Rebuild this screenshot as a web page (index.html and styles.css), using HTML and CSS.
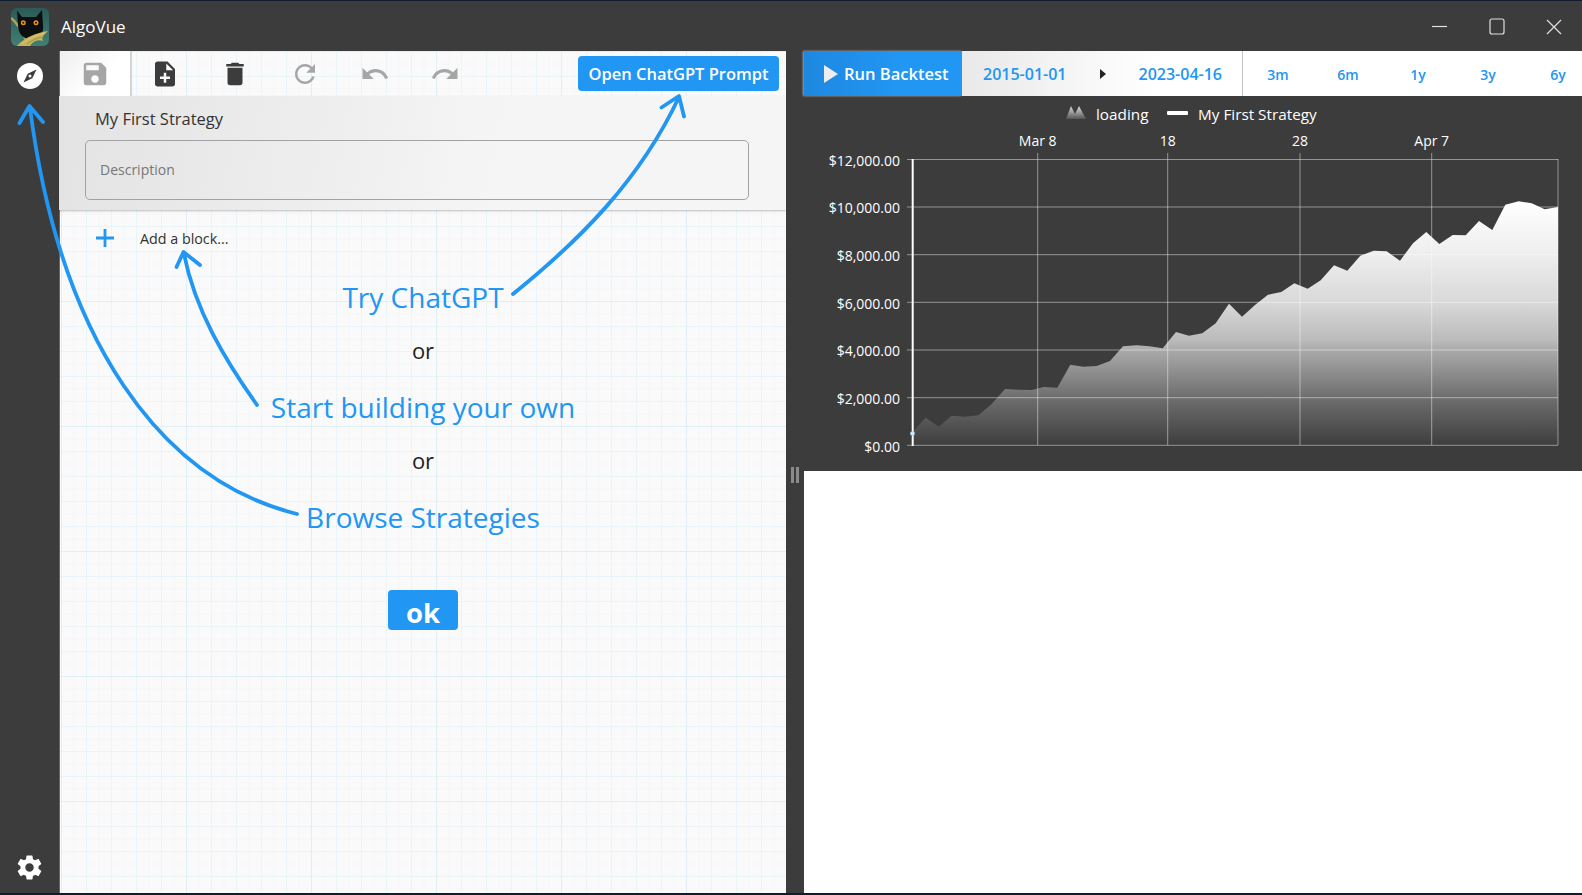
FILE: index.html
```html
<!DOCTYPE html>
<html lang="en">
<head>
    <meta charset="UTF-8"/>
    <title>AlgoVue</title>
    <link rel="stylesheet" href="styles.css">
</head>
<body>
    <div class="app">
        <div class="titlebar">
            <svg class="logo" viewBox="0 0 38 38">
                <defs>
                    <linearGradient id="logoBg" x1="0" y1="0" x2="0" y2="1">
                        <stop offset="0" stop-color="#2b5a58"/>
                        <stop offset="1" stop-color="#3f8074"/>
                    </linearGradient>
                    <clipPath id="logoClip"><rect width="38" height="38" rx="6"/></clipPath>
                </defs>
                <g clip-path="url(#logoClip)">
                    <rect width="38" height="38" fill="url(#logoBg)"/>
                    <path d="M0 10C7 15 11 24 15 32" stroke="#a9a45f" stroke-width="2.500" fill="none"/>
                    <path d="M6 2.500L11 9L25 9L31 2L32 17C33 24 30 30 19 31C11 31 7 24 7 17Z" fill="#0c0e10"/>
                    <path d="M6 38C14 29 25 25 37 23C33 27 30 29 32 33C27 31 22 33 19 38Z" fill="#c9b25c"/>
                    <path d="M11 36C18 30 26 27 34 25" stroke="#e2cf7e" stroke-width=".8" fill="none"/>
                    <path d="M16 36C21 32 26 30 31 29" stroke="#8f8a45" stroke-width=".8" fill="none"/>
                    <circle cx="12.300" cy="14.700" r="2.500" fill="#e8921c"/>
                    <circle cx="25" cy="14.700" r="2.500" fill="#e8921c"/>
                    <circle cx="12.300" cy="14.700" r="1" fill="#221100"/>
                    <circle cx="25" cy="14.700" r="1" fill="#221100"/>
                </g>
            </svg>
            <span class="app-name">AlgoVue</span>
            <div class="win-controls">
                <svg viewBox="0 0 50 50"><path d="M18 25.500H33" stroke="#e0e0e0" stroke-width="1.200"/></svg>
                <svg viewBox="0 0 50 50"><rect x="18" y="18" width="14" height="15" rx="2" fill="none" stroke="#e0e0e0" stroke-width="1.200"/></svg>
                <svg viewBox="0 0 50 50"><path d="M18 19L32 33M32 19L18 33" stroke="#e0e0e0" stroke-width="1.200"/></svg>
            </div>
        </div>

        <div class="main">
            <div class="sidebar">
                <svg class="side-icon" viewBox="0 0 26 26">
                    <circle cx="13" cy="13" r="13" fill="#fff"/>
                    <path d="M19.500 6.500L15.300 15.300L6.500 19.500L10.700 10.700Z" fill="#3c3c3c"/>
                    <circle cx="13" cy="13" r="1.500" fill="#fff"/>
                </svg>
                <svg class="side-gear" viewBox="0 0 24 24">
                    <path fill="#fff" d="M19.430 12.980c.04-.32.07-.64.07-.98s-.03-.66-.07-.98l2.110-1.650c.19-.15.24-.42.12-.64l-2-3.460c-.12-.22-.39-.3-.61-.22l-2.490 1c-.52-.4-1.080-.73-1.690-.98l-.38-2.650C14.460 2.180 14.250 2 14 2h-4c-.25 0-.46.18-.49.42l-.38 2.650c-.61.25-1.170.59-1.690.98l-2.490-1c-.23-.09-.49 0-.61.22l-2 3.460c-.13.22-.07.49.12.64l2.110 1.650c-.04.32-.07.65-.07.98s.03.66.07.98l-2.110 1.650c-.19.15-.24.42-.12.64l2 3.460c.12.22.39.3.61.22l2.490-1c.52.4 1.080.73 1.690.98l.38 2.650c.03.24.24.42.49.42h4c.25 0 .46-.18.49-.42l.38-2.650c.61-.25 1.170-.59 1.690-.98l2.490 1c.23.09.49 0 .61-.22l2-3.460c.12-.22.07-.49-.12-.64l-2.110-1.650zM12 15.500c-1.930 0-3.500-1.570-3.500-3.500s1.570-3.500 3.500-3.500 3.500 1.570 3.500 3.500-1.570 3.500-3.500 3.500z"/>
                </svg>
            </div>

            <div class="editor">
                <div class="toolbar">
                    <div class="tool active">
                        <svg viewBox="0 0 24 24" class="muted"><path d="M17 3H5c-1.110 0-2 .9-2 2v14c0 1.100.89 2 2 2h14c1.100 0 2-.9 2-2V7l-4-4zm-5 16c-1.660 0-3-1.340-3-3s1.340-3 3-3 3 1.340 3 3-1.340 3-3 3zm3-10H5V5h10v4z"/></svg>
                    </div>
                    <div class="tool">
                        <svg viewBox="0 0 24 24"><path d="M14 2H6c-1.100 0-1.990.9-1.990 2L4 20c0 1.100.89 2 1.990 2H18c1.100 0 2-.9 2-2V8l-6-6zm2 14h-3v3h-2v-3H8v-2h3v-3h2v3h3v2zm-3-7V3.500L18.500 9H13z"/></svg>
                    </div>
                    <div class="tool">
                        <svg viewBox="0 0 24 24"><path d="M6 19c0 1.100.9 2 2 2h8c1.100 0 2-.9 2-2V7H6v12zM19 4h-3.500l-1-1h-5l-1 1H5v2h14V4z"/></svg>
                    </div>
                    <div class="tool">
                        <svg viewBox="0 0 24 24" class="muted"><path d="M17.650 6.350C16.200 4.900 14.210 4 12 4c-4.420 0-7.990 3.580-7.990 8s3.570 8 7.990 8c3.730 0 6.840-2.550 7.730-6h-2.080c-.82 2.330-3.040 4-5.650 4-3.310 0-6-2.690-6-6s2.690-6 6-6c1.660 0 3.140.69 4.220 1.780L13 11h7V4l-2.350 2.350z"/></svg>
                    </div>
                    <div class="tool">
                        <svg viewBox="0 0 24 24" class="muted"><path d="M12.500 8c-2.650 0-5.050.99-6.900 2.600L2 7v9h9l-3.620-3.620c1.390-1.160 3.160-1.880 5.120-1.880 3.540 0 6.550 2.310 7.600 5.500l2.370-.78C21.080 11.030 17.150 8 12.500 8z"/></svg>
                    </div>
                    <div class="tool">
                        <svg viewBox="0 0 24 24" class="muted"><path d="M18.400 10.600C16.550 8.990 14.150 8 11.500 8c-4.650 0-8.580 3.030-9.960 7.220L3.900 16c1.050-3.190 4.050-5.500 7.600-5.500 1.950 0 3.730.72 5.120 1.880L13 16h9V7l-3.600 3.600z"/></svg>
                    </div>
                    <button class="prompt-btn">Open ChatGPT Prompt</button>
                </div>

                <div class="strategy-card">
                    <div class="strategy-name">My First Strategy</div>
                    <div class="description">Description</div>
                </div>

                <div class="add-block">
                    <svg viewBox="0 0 18 18"><path d="M9 0V18M0 9H18" stroke="#2196f3" stroke-width="2.800"/></svg>
                    <span>Add a block...</span>
                </div>

                <div class="welcome">
                    <p class="hint">Try ChatGPT</p>
                    <p class="or">or</p>
                    <p class="hint">Start building your own</p>
                    <p class="or">or</p>
                    <p class="hint">Browse Strategies</p>
                    <button class="ok-btn">ok</button>
                </div>
            </div>

            <div class="gutter"><span class="handle"></span></div>

            <div class="results">
                <div class="run-bar">
                    <div class="run-btn">
                        <svg viewBox="0 0 14 18"><path d="M0 0L14 9L0 18Z" fill="#eee"/></svg>
                        Run Backtest
                    </div>
                    <div class="dates">
                        <span>2015-01-01</span>
                        <svg viewBox="0 0 6 10"><path d="M0 0L6 5L0 10Z" fill="#222"/></svg>
                        <span>2023-04-16</span>
                    </div>
                    <div class="periods">
                        <span>3m</span>
                        <span>6m</span>
                        <span>1y</span>
                        <span>3y</span>
                        <span>6y</span>
                    </div>
                </div>

                <div class="chart">
                    <svg viewBox="0 0 778 375">
                        <defs>
                            <linearGradient id="areaFill" gradientUnits="userSpaceOnUse" x1="0" y1="105" x2="0" y2="349">
                                <stop offset="0" stop-color="#fff"/>
                                <stop offset=".22" stop-color="#eee"/>
                                <stop offset=".42" stop-color="#d8d8d8"/>
                                <stop offset=".57" stop-color="#bbb"/>
                                <stop offset=".61" stop-color="#aaa"/>
                                <stop offset=".80" stop-color="#707070"/>
                                <stop offset="1" stop-color="#3e3e3e"/>
                            </linearGradient>
                            <linearGradient id="legendFill" x1="0" y1="0" x2="0" y2="1">
                                <stop offset="0" stop-color="#ddd"/>
                                <stop offset="1" stop-color="#555"/>
                            </linearGradient>
                        </defs>

                        <!-- legend -->
                        <path d="M262 23L267 10L271 18L275 10L282 23Z" fill="url(#legendFill)"/>
                        <text x="292" y="24" class="legend">loading</text>
                        <rect x="363" y="15" width="21" height="4" rx="1" fill="#fff"/>
                        <text x="394" y="24" class="legend">My First Strategy</text>

                        <!-- area -->
                        <path fill="url(#areaFill)" d="M108.700 349.300L108.700 335.700L121.700 321.700L134.700 330.700L147.700 319.700L161 320.700L174.300 319.300L187.700 308L201 293L214.300 293.700L227.700 294L240 291L253.300 291.700L266.300 268.700L279.300 270.700L292.700 270L306 265L319 250.300L332.700 249.300L345.300 250.300L358.700 252.300L372 236L385 239.700L398.300 237.300L411.700 227.300L425 207.700L438 220.700L451 209L464 198.700L477.300 196L490.300 187.300L503.700 192.700L516.700 184.300L530 169.300L543.300 174.700L556.300 159.700L569.700 154.700L582.700 155.300L596 164.700L609 147.300L622.300 136L635.300 148L648.700 139L661.700 139.300L675 125L688.300 134L701.300 108.700L714.700 105.300L727.700 107.300L740.700 113.300L754 111L754 349.300Z"/>

                        <!-- grid -->
                        <path class="grid" d="M103 63.500H754M103 111H754M103 158.700H754M103 206.300H754M103 254H754M103 301.700H754M103 349.300H754"/>
                        <path class="grid" d="M233.700 57V349M363.700 57V349M496 57V349M627.700 57V349M754 63V349"/>
                        <path d="M108.700 63V350" stroke="#fff" stroke-width="2"/>
                        <rect x="106.500" y="336" width="4" height="3" fill="#eef4fa" stroke="#7fa8d0" stroke-width=".6"/>

                        <!-- axis labels -->
                        <text x="96" y="70" class="y-label">$12,000.00</text>
                        <text x="96" y="117" class="y-label">$10,000.00</text>
                        <text x="96" y="165" class="y-label">$8,000.00</text>
                        <text x="96" y="213" class="y-label">$6,000.00</text>
                        <text x="96" y="260" class="y-label">$4,000.00</text>
                        <text x="96" y="308" class="y-label">$2,000.00</text>
                        <text x="96" y="356" class="y-label">$0.00</text>
                        <text x="233.700" y="50" class="x-label">Mar 8</text>
                        <text x="363.700" y="50" class="x-label">18</text>
                        <text x="496" y="50" class="x-label">28</text>
                        <text x="627.700" y="50" class="x-label">Apr 7</text>
                    </svg>
                </div>
                <div class="results-body"></div>
            </div>
        </div>

        <!-- tutorial arrows, drawn over everything -->
        <svg class="arrows" viewBox="0 0 1582 895">
            <path d="M297 514C160 480 60 340 30 108M19.500 123L29.500 106L43 122"/>
            <path d="M257 405C225 360 195 310 184 254M176.500 267L183.500 252L200 265"/>
            <path d="M513 294C580 240 640 180 679 97M661.500 107.500L679 96L684 116.500"/>
        </svg>
    </div>
</body>
</html>
```

FILE: styles.css
```css
* {
    box-sizing: border-box;
}
body {
    margin: 0;
    background: #0f1c2e;
    font-family: "Open Sans", "Noto Sans", sans-serif;
    color: #222;
}
p {
    margin: 0;
}
.app {
    position: relative;
    width: 1582px;
    height: 895px;
    padding: 1px 0 2px 0;
    display: flex;
    flex-direction: column;
    overflow: hidden;
}

/* title bar */
.titlebar {
    height: 50px;
    flex: none;
    display: flex;
    align-items: center;
    background: #3c3c3c;
    color: #fff;
    padding-left: 11px;
}
.logo {
    width: 38px;
    height: 38px;
    margin-top: 1px;
}
.app-name {
    margin-left: 12px;
    font-size: 17px;
}
.win-controls {
    margin-left: auto;
    display: flex;
    margin-right: 3px;
    margin-top: -1px;
}
.win-controls svg {
    width: 50px;
    height: 50px;
    margin-left: 7.500px;
}
.main {
    flex: 1;
    display: flex;
    min-height: 0;
}

/* sidebar */
.sidebar {
    width: 60px;
    flex: none;
    background: #3c3c3c;
    border-right: 1px solid #5e6a6c;
    display: flex;
    flex-direction: column;
    justify-content: space-between;
    align-items: center;
    padding: 12px 0 11px 1px;
}
.side-icon {
    width: 26px;
    height: 26px;
}
.side-gear {
    width: 29px;
    height: 29px;
    margin-left: -1px;
}

/* strategy editor */
.editor {
    width: 726px;
    flex: none;
    background-color: #fafafa;
    background-image:
        linear-gradient(to right, #e0eff6 1px, transparent 1px),
        linear-gradient(to bottom, #e0eff6 1px, transparent 1px),
        linear-gradient(to right, #ebf4f8 1px, transparent 1px),
        linear-gradient(to bottom, #ebf4f8 1px, transparent 1px),
        linear-gradient(to right, #f3f6f7 1px, transparent 1px),
        linear-gradient(to bottom, #f3f6f7 1px, transparent 1px);
    background-size: 125px 125px, 125px 125px, 25px 25px, 25px 25px, 12.500px 12.500px, 12.500px 12.500px;
    background-position: 1px 0;
}
.toolbar {
    height: 45px;
    display: flex;
    align-items: center;
}
.tool {
    width: 70px;
    height: 45px;
    display: flex;
    align-items: center;
    justify-content: center;
}
.tool.active {
    background: linear-gradient(135deg, #efefef, #fff 60%);
    box-shadow: 2px 0 0 #d4d4d4;
}
.tool svg {
    width: 30px;
    height: 30px;
    fill: #3c3c3c;
}
.tool svg.muted {
    fill: #a6a6a6;
}
.prompt-btn {
    margin-left: auto;
    margin-right: 7px;
    width: 201px;
    height: 35px;
    border: none;
    border-radius: 4px;
    background: #2196f3;
    color: #fff;
    font-family: inherit;
    font-size: 16.500px;
    font-weight: 600;
    white-space: nowrap;
    padding: 0;
}
.strategy-card {
    height: 114px;
    margin-left: -1px;
    background: linear-gradient(100deg, #e3e3e3, #f5f5f5 60%);
    box-shadow: 0 1px 2px rgba(0,0,0,0.25);
    padding: 11px 37px 0 26px;
}
.strategy-name {
    padding-left: 10px;
    font-size: 16.500px;
    line-height: 24px;
    color: #333;
}
.description {
    margin-top: 9px;
    height: 60px;
    border: 1.500px solid #a2a2a2;
    border-radius: 5px;
    padding-left: 14px;
    line-height: 57px;
    font-size: 14px;
    color: #777;
}
.add-block {
    display: flex;
    align-items: center;
    height: 56px;
    padding-left: 36px;
    font-size: 14.300px;
    color: #333;
}
.add-block svg {
    width: 18px;
    height: 18px;
    margin-right: 26px;
}
.welcome {
    display: flex;
    flex-direction: column;
    align-items: center;
    margin-top: 3px;
}
.hint {
    font-size: 28px;
    line-height: 56px;
    color: #2196f3;
}
.or {
    margin: -2px 0 2px 0;
    font-size: 22px;
    line-height: 54px;
    color: #222;
}
.ok-btn {
    margin-top: 45px;
    width: 70px;
    height: 40px;
    border: none;
    border-radius: 4px;
    background: #2196f3;
    color: #fff;
    font-family: inherit;
    font-size: 27.500px;
    font-weight: 700;
    line-height: 40px;
    padding: 3px 0 0 0;
}

/* splitter */
.gutter {
    width: 18px;
    flex: none;
    background: #3c3c3c;
    position: relative;
    z-index: 1;
}
.handle {
    display: block;
    width: 8px;
    height: 16px;
    margin: 416px 0 0 5px;
    border-left: 3px solid #8a8a8a;
    border-right: 3px solid #8a8a8a;
}

/* backtest */
.results {
    flex: 1;
    min-width: 0;
    display: flex;
    flex-direction: column;
}
.run-bar {
    height: 45px;
    flex: none;
    display: flex;
    background: #fff;
    position: relative;
    z-index: 1;
}
.run-btn {
    width: 158px;
    flex: none;
    display: flex;
    align-items: center;
    padding-left: 20px;
    background: linear-gradient(to right, #1e88e0, #2196f3 60%);
    box-shadow: -1px 0 2px #aaa;
    color: #fff;
    font-size: 16.500px;
    font-weight: 600;
    white-space: nowrap;
}
.run-btn svg {
    width: 14px;
    height: 18px;
    margin-right: 6px;
}
.dates {
    width: 281px;
    flex: none;
    display: flex;
    align-items: center;
    justify-content: space-between;
    padding: 0 20px 0 21px;
    background: linear-gradient(to right, #e9e9e9, #fff 70%);
    border-right: 1px solid #c4c4c4;
    font-size: 16px;
    font-weight: 600;
    color: #2196f3;
}
.dates svg {
    width: 6px;
    height: 10px;
}
.periods {
    display: flex;
    flex: 1;
    min-width: 0;
    overflow: hidden;
    font-size: 14px;
    font-weight: 600;
    color: #2196f3;
}
.periods span {
    flex: none;
    width: 70px;
    text-align: center;
    line-height: 47px;
}
.chart {
    height: 375px;
    flex: none;
    background: #3c3c3c;
}
.chart svg {
    display: block;
    width: 778px;
    height: 375px;
}
.grid {
    fill: none;
    stroke: rgba(255,255,255,0.45);
    stroke-width: 1;
}
.legend {
    font-size: 15.300px;
    fill: #fff;
}
.y-label {
    font-size: 14px;
    fill: #fff;
    text-anchor: end;
}
.x-label {
    font-size: 14px;
    fill: #fff;
    text-anchor: middle;
}
.results-body {
    flex: 1;
    background: #fff;
}

/* arrows over the page */
.arrows {
    position: absolute;
    left: 0;
    top: 0;
    width: 1582px;
    height: 895px;
    pointer-events: none;
    z-index: 2;
}
.arrows path {
    fill: none;
    stroke: #2196f3;
    stroke-width: 3.800;
    stroke-linecap: round;
    stroke-linejoin: round;
}
```
